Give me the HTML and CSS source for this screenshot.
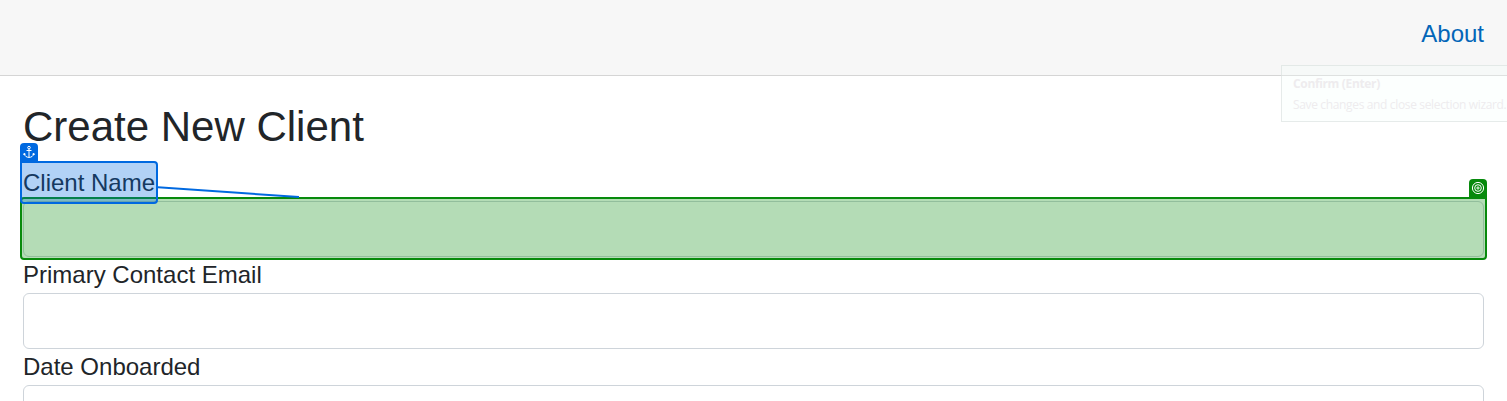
FILE: index.html
```html
<!DOCTYPE html>
<html lang="en">
<head>
<meta charset="utf-8">
<title>Create New Client</title>
<link rel="stylesheet" href="styles.css">
</head>
<body>
<header class="topbar"><a class="nav-link">About</a></header>
<main class="content">
  <h1 class="title">Create New Client</h1>
  <form class="form">
    <label class="label" for="name">Client Name</label>
    <input class="field" id="name">
    <label class="label" for="email">Primary Contact Email</label>
    <input class="field" id="email">
    <label class="label" for="date">Date Onboarded</label>
    <input class="field" id="date">
  </form>
</main>
<div class="target-box"></div>
<div class="target-tab">
  <svg width="14" height="14" viewBox="0 0 14 14" fill="none" stroke="#fff"><circle cx="7" cy="7" r="5.6"/><circle cx="7" cy="7" r="3.3"/><circle cx="7" cy="7" r="1.1"/></svg>
</div>
<div class="anchor-box"></div>
<div class="anchor-tab">
  <svg width="12" height="14" viewBox="0 0 12 14" fill="none" stroke="#fff"><circle cx="6" cy="2.6" r="1.3"/><path d="M6 3.900V12.500M3.500 5.500h5M1.200 8.700C1.600 11 3.600 12.400 6 12.400s4.400-1.400 4.800-3.700M.5 9.800l.7-1.500 1.500 1M11.500 9.800l-.7-1.500-1.500 1"/></svg>
</div>
<svg class="connector" width="144" height="14" viewBox="0 0 144 14"><path d="M0 3.300L141 13" stroke="#0069e0" stroke-width="2"/></svg>
<aside class="tooltip"><strong class="tooltip-title">Confirm (Enter)</strong><span class="tooltip-text">Save changes and close selection wizard.</span></aside>
</body>
</html>
```
FILE: styles.css
```css
* { box-sizing: border-box; }
html { overflow: hidden; }
body { margin: 0; position: relative; height: 401px; overflow: hidden; background: #fff; color: #212529; font: 24px/36px "Liberation Sans", Arial, sans-serif; }
.topbar { height: 76px; padding: 16px 23px 0; display: flex; justify-content: flex-end; background: #f7f7f7; border-bottom: 1px solid #d5d5d5; }
.nav-link { color: #0366b8; }
.content { padding: 26px 23px 0; }
.title { margin: 0 0 13px; font-size: 42px; font-weight: 400; line-height: 50px; }
.form { display: flex; flex-direction: column; }
.label { height: 36px; }
.field { width: 100%; height: 56px; border: 1px solid #ced4da; border-radius: 6px; background: #fff; outline: 0; }
.target-box, .anchor-box, .target-tab, .anchor-tab, .connector, .tooltip { position: absolute; }
.target-box { left: 20px; top: 197px; width: 1467px; height: 63px; border: 2px solid #078a0c; border-radius: 4px 0 4px 4px; background: rgba(7, 138, 12, .3); }
.target-tab { left: 1469px; top: 179px; width: 18px; height: 18px; padding: 2px; border-radius: 4px 4px 0 0; background: #078a0c; }
.anchor-box { left: 20px; top: 161px; width: 138px; height: 43px; border: 2px solid #0069e0; border-radius: 0 4px 4px 4px; background: rgba(0, 105, 224, .3); }
.anchor-tab { left: 20px; top: 143px; width: 18px; height: 18px; padding: 2px 3px; border-radius: 4px 4px 0 0; background: #0069e0; }
.target-tab svg, .anchor-tab svg { display: block; }
.connector { left: 158px; top: 184px; }
.tooltip { left: 1281px; top: 65px; width: 226px; height: 57px; padding: 7px 0 7px 11px; display: flex; flex-direction: column; border: 1px solid rgba(215, 222, 220, .6); border-right: 0; background: rgba(245, 255, 252, .3); color: #eeecee; font: 12px/21px "Open Sans", sans-serif; white-space: nowrap; }
.tooltip-title { font-weight: 700; letter-spacing: -.35px; }
.tooltip-text { letter-spacing: -.35px; }
```
